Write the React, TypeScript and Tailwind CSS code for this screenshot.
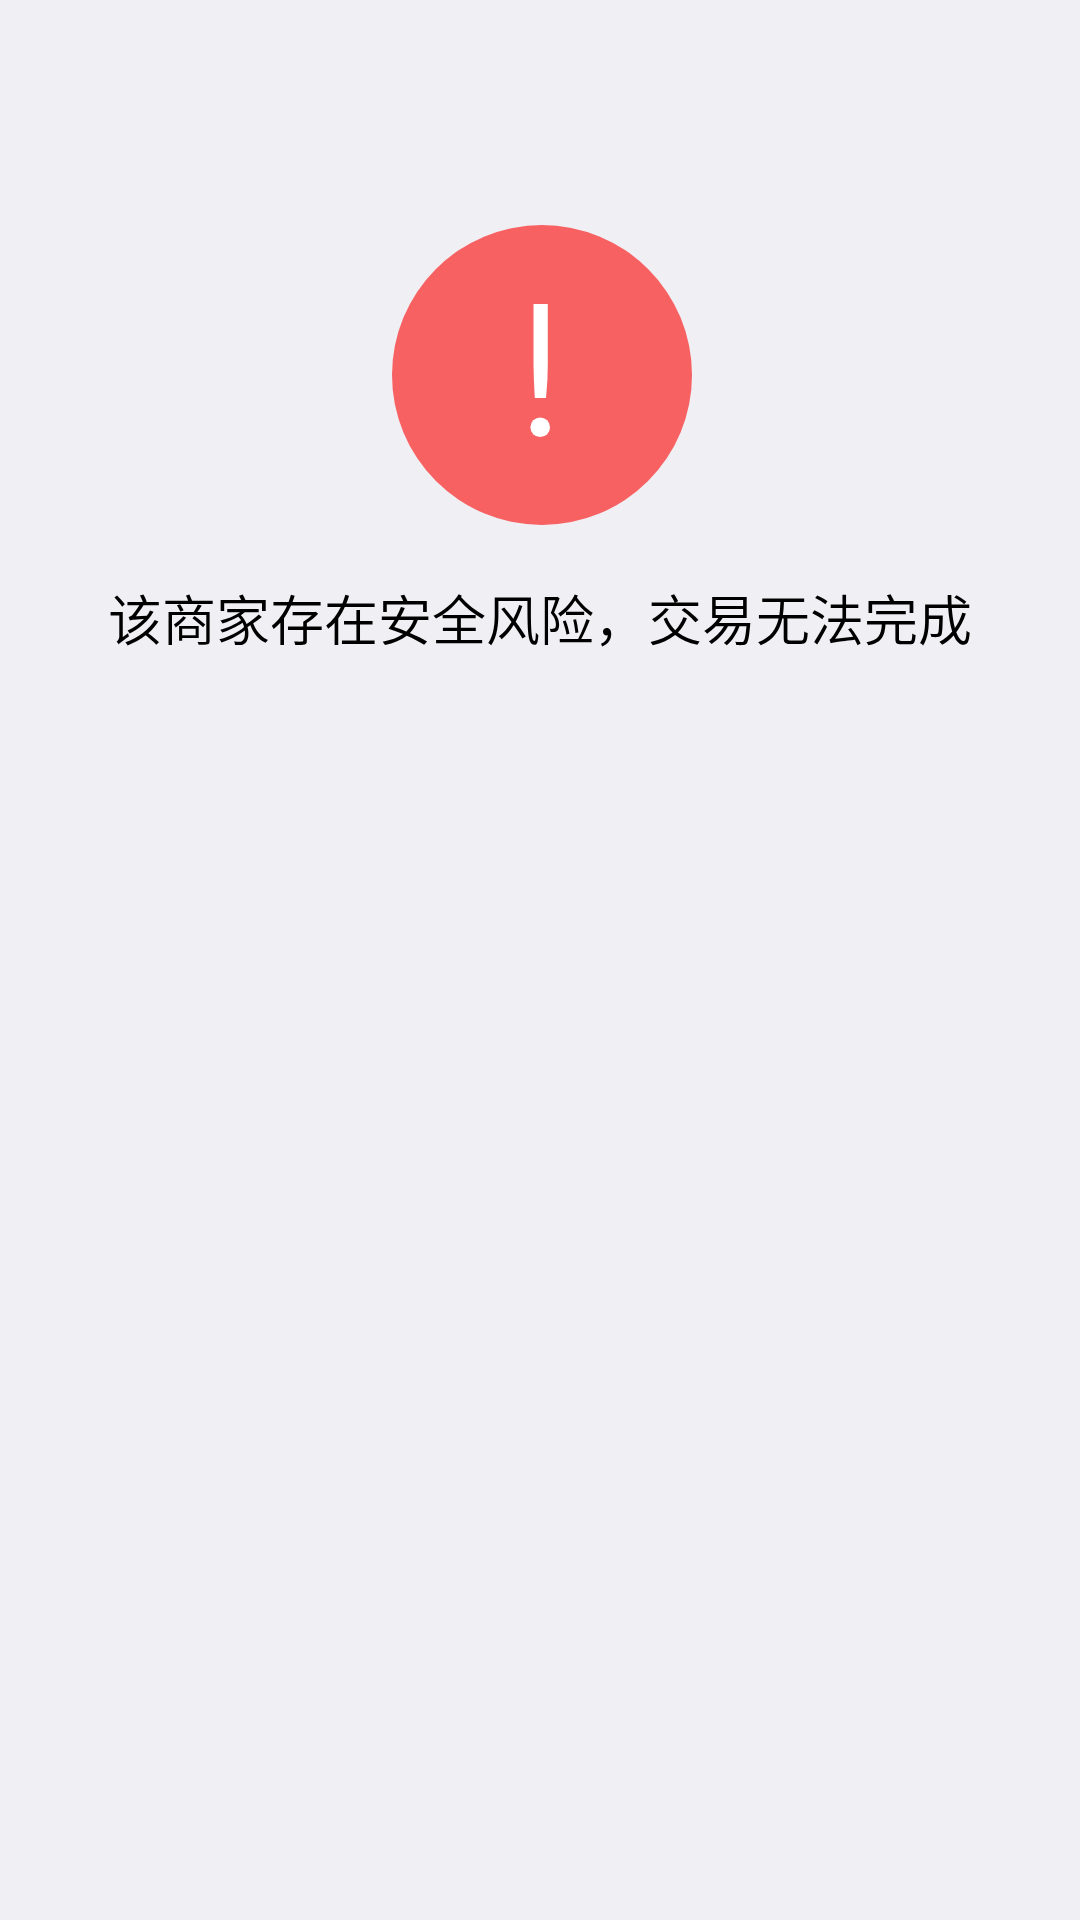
export default function App() {
  return (
    <main className="flex min-h-screen flex-col items-center bg-[#f0eff4] pt-[225px] font-['Noto_Sans_CJK_SC',sans-serif] text-black">
      <svg viewBox="0 0 300 300" className="ml-1 size-[300px]" role="img" aria-label="警告">
        <circle cx="150" cy="150" r="150" fill="#f76162" />
        <path d="M141.5 79H155.8V140L155.4 155L154 173H142.8L141.9 155L141.5 140Z" fill="#fff" />
        <circle cx="148.2" cy="202.3" r="9.8" fill="#fff" />
      </svg>
      <h1 className="mt-[53px] text-center text-[54px] leading-20 font-[350]">该商家存在安全风险，交易无法完成</h1>
    </main>
  );
}
